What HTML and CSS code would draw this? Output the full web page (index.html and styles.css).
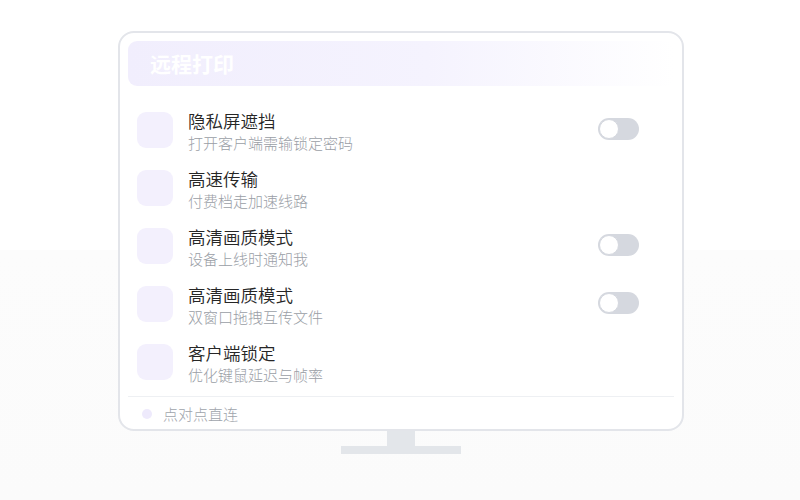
FILE: index.html
```html
<!DOCTYPE html>
<html lang="zh-CN">
<head>
  <meta charset="UTF-8">
  <title>远程打印</title>
  <meta name="viewport" content="width=device-width, initial-scale=1.0">
  <link rel="stylesheet" href="styles.css">
</head>
<body>
  <div class="monitor">
    <div class="pantalla">
      <div class="cabecera">远程打印</div>

      <ul class="lista">
        <li class="fila">
          <span class="icono"></span>
          <div class="textos">
            <p class="titulo">隐私屏遮挡</p>
            <p class="sub">打开客户端需输锁定密码</p>
          </div>
          <span class="interruptor"></span>
        </li>
        <li class="fila">
          <span class="icono"></span>
          <div class="textos">
            <p class="titulo">高速传输</p>
            <p class="sub">付费档走加速线路</p>
          </div>
        </li>
        <li class="fila">
          <span class="icono"></span>
          <div class="textos">
            <p class="titulo">高清画质模式</p>
            <p class="sub">设备上线时通知我</p>
          </div>
          <span class="interruptor"></span>
        </li>
        <li class="fila">
          <span class="icono"></span>
          <div class="textos">
            <p class="titulo">高清画质模式</p>
            <p class="sub">双窗口拖拽互传文件</p>
          </div>
          <span class="interruptor"></span>
        </li>
        <li class="fila">
          <span class="icono"></span>
          <div class="textos">
            <p class="titulo">客户端锁定</p>
            <p class="sub">优化键鼠延迟与帧率</p>
          </div>
        </li>
      </ul>

      <div class="pie">
        <span class="punto"></span>
        点对点直连
      </div>
    </div>
    <div class="cuello"></div>
    <div class="base"></div>
  </div>
</body>
</html>
```

FILE: styles.css
```css
html, body { height: 100%; }

body {
  margin: 0;
  background: linear-gradient(180deg, #fff 0, #fff 250px, #fcfcfc 250px, #fbfbfb 100%);
  font-family: "Noto Sans CJK SC", "Noto Sans", sans-serif;
}

.monitor {
  display: flex;
  flex-direction: column;
  align-items: center;
  padding-top: 31px;
  padding-left: 2px;
}

.pantalla {
  box-sizing: border-box;
  width: 566px;
  height: 400px;
  border: 2px solid #e3e5ea;
  border-radius: 16px;
  padding: 8px;
  background: #fff;
  display: flex;
  flex-direction: column;
}

.cabecera {
  height: 45px;
  border-radius: 9px;
  background: linear-gradient(90deg, #f1eefd 0%, #f5f3fe 55%, rgba(255,255,255,0) 100%);
  color: #fff;
  font-size: 21px;
  font-weight: bold;
  line-height: 45px;
  padding-left: 22px;
}

.lista {
  list-style: none;
  margin: 15px 0 0;
  padding: 0;
}

.fila {
  height: 58px;
  display: flex;
  align-items: center;
  padding: 0 35px 0 9px;
}

.icono {
  width: 36px;
  height: 36px;
  border-radius: 9px;
  background: #f3f0fd;
  flex-shrink: 0;
}

.textos {
  flex: 1;
  margin-left: 15px;
  margin-top: 3px;
}

.textos p { margin: 0; }

.titulo {
  font-size: 17.5px;
  line-height: 22px;
  color: #262626;
  font-weight: 350;
}

.sub {
  font-size: 15px;
  line-height: 21px;
  color: #9a9ea6;
  font-weight: 300;
}

.interruptor {
  position: relative;
  width: 41px;
  height: 22px;
  border-radius: 11px;
  background: #d5d8df;
  margin-top: -2px;
}

.interruptor::after {
  content: "";
  position: absolute;
  left: 1px;
  top: 1px;
  width: 18px;
  height: 18px;
  border-radius: 50%;
  background: #fff;
  border: 1px solid #d5d8df;
}

.pie {
  margin-top: 5px;
  border-top: 1px solid #eef0f3;
  flex: 1;
  display: flex;
  align-items: center;
  gap: 11px;
  padding: 6px 0 0 14px;
  font-size: 15px;
  font-weight: 300;
  color: #a0a4ab;
}

.punto {
  width: 10px;
  height: 10px;
  border-radius: 50%;
  background: #eeeafc;
}

.cuello {
  width: 28px;
  height: 15px;
  background: #e3e6ea;
}

.base {
  width: 120px;
  height: 8px;
  background: #e3e6ea;
}
```
